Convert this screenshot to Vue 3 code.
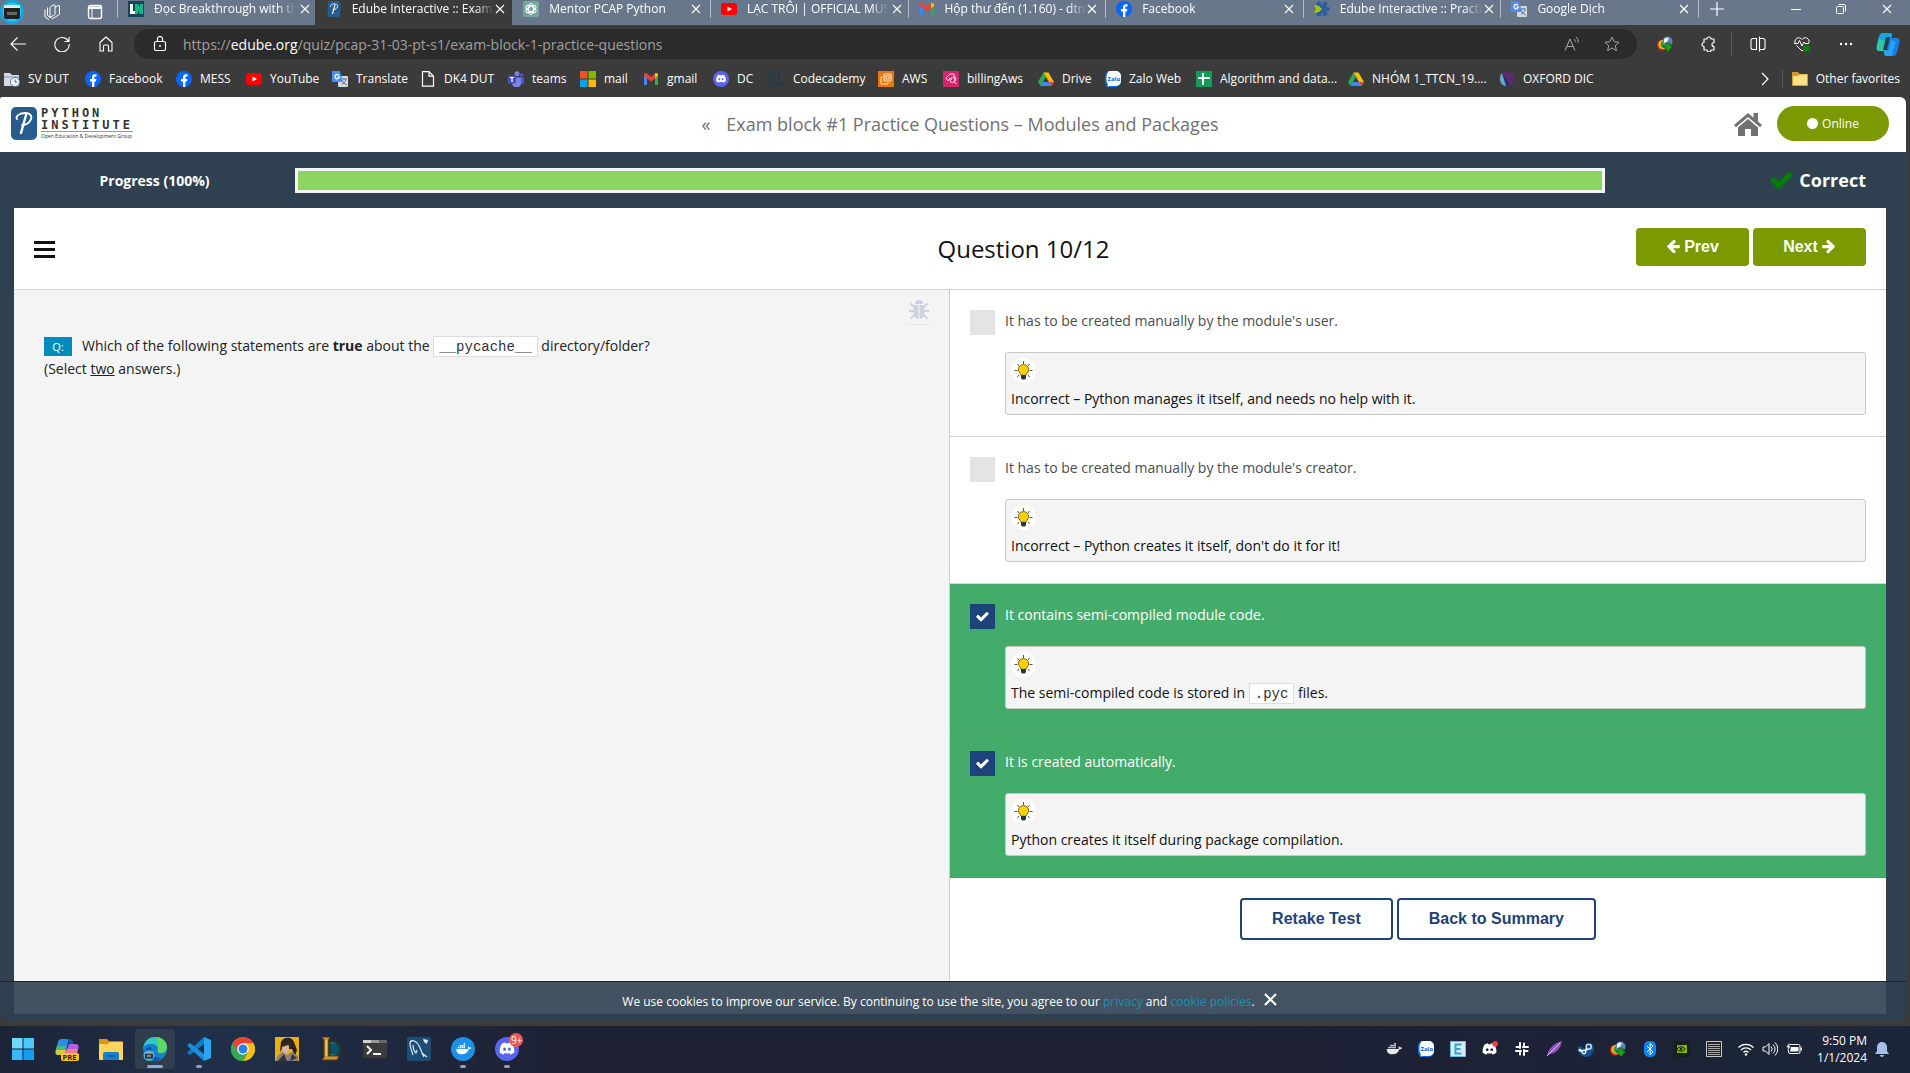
<script setup>
import { h } from 'vue'

const gLetterT = '<rect x="6" y="5" width="10" height="11" rx="1" fill="#d5d8dc"/><path d="M9 8h6M12 7v1M14 8c0 3-3 5-4 5M10 9c1 3 3 4 5 5" stroke="#5f7790" fill="none"/><path d="M1 0h7l3 11H1a1 1 0 0 1-1-1V1a1 1 0 0 1 1-1z" fill="#4d8df6"/><path d="M7 4.300A2.200 2.200 0 1 0 7.400 6H5.400" stroke="#fff" fill="none" stroke-width="1.200"/>'
const idm = '<circle cx="5.500" cy="9" r="5.500" fill="#d9281c"/><circle cx="6" cy="8.500" r="4.500" fill="#f0c419"/><circle cx="7" cy="8.500" r="3.400" fill="#2c9b3b"/><circle cx="10.500" cy="5.500" r="5" fill="#5d83b8"/><path d="M7 3a4 4 0 0 1 5-1l-2 4-3 1z" fill="#e9eef2"/><path d="M6 10h3V7h4v3h3l-5 6z" fill="#19a01c" stroke="#0c4f10" stroke-width=".6"/>'
const discordFace = 'M17 6.500a14 14 0 0 0-3.200-1l-.5.900a12 12 0 0 0-2.600 0l-.5-.9a14 14 0 0 0-3.200 1C5 9.500 4.500 12.500 4.700 15.500a13 13 0 0 0 4 2l.9-1.500c1.600.5 3.200.5 4.800 0l.9 1.500a13 13 0 0 0 4-2c.3-3.500-.6-6.500-2.300-9zM9.600 13.700c-1.900 0-1.900-3.100 0-3.100s1.900 3.100 0 3.100zm4.800 0c-1.900 0-1.900-3.100 0-3.100s1.900 3.100 0 3.100z'
const whale = 'M3 12h15c1 0 1-2 .3-3 .8-.8 1.500-.5 2 .8 1 0 2 .1 2.700.8-.8 1.500-2 1.700-3.300 1.700C18 17 15 19 10.500 19 5.500 19 3 16.500 3 12zM5 9h2v2H5zm2.600 0h2v2h-2zm2.600 0h2v2h-2zm2.600 0h2v2h-2zM7.600 6.500h2v2h-2zm2.600 0h2v2h-2zm2.600 0h2v2h-2zm0-2.500h2v2h-2z'
const steamPath = '<circle cx="12" cy="12" r="12" fill="#14508c"/><path d="M1 7A12 12 0 0 1 20 3L12 12z" fill="#10233f"/><path d="M1 13l8 3.500 7-7" stroke="#e8eef5" stroke-width="3.500" fill="none"/><circle cx="16" cy="8.500" r="3.800" fill="#14508c" stroke="#e8eef5" stroke-width="2"/><circle cx="9" cy="16.500" r="2.600" fill="#14508c" stroke="#e8eef5" stroke-width="2"/>'

const icons = {
  avatar: ['0 0 24 24', '<circle cx="12" cy="12" r="12" fill="#12a5e0"/><circle cx="12" cy="12" r="9.500" fill="#2fc3f5"/><path d="M4 8h16v9a2 2 0 0 1-2 2H6a2 2 0 0 1-2-2z" fill="#222"/><path d="M4 5h16v3H4z" fill="#e8e8e8"/><path d="M7 12h10v3H7z" fill="#666"/>'],
  workspaces: ['0 0 16 16', '<g fill="none" stroke="#fff"><path d="M1 5.500v7.500l4 2.500"/><path d="M3.500 3.500v8l4 2.500"/><path d="M6 3.500a1 1 0 0 1 .6-.9L10 .8a.7.7 0 0 1 1 .6V10a1 1 0 0 1-.5.800L6 13.500z"/><path d="M11 3.200l3.500-1.700a.7.7 0 0 1 1 .6V10a1 1 0 0 1-.5.800L8 15"/></g>'],
  tabmenu: ['0 0 16 16', '<rect x="1.500" y="1.500" width="13" height="13" rx="2" fill="none" stroke="#fff" stroke-width="1.400"/><path d="M1.500 2.500h13v2.500h-13z" fill="#fff"/><path d="M5 5v9" stroke="#fff"/>'],
  ln: ['0 0 16 16', '<path d="M0 0h16v16H0z" fill="#12485a"/><path d="M2 3h3v7h3v3H2z" fill="#fff"/><path d="M7 13V3h3l2 4V3h3v10h-3l-2-4v4z" fill="#12b886"/>'],
  python: ['0 0 26 33', '<rect width="26" height="33" rx="5" fill="#265d8e"/><g fill="none" stroke="#fff" stroke-linecap="round" stroke-linejoin="round"><path d="M6 12c-2-3 3-6 8-6 6 0 8 4 5 8-2 3-5 4-8 4" stroke-width="1.800"/><path d="M15 8l-5 18" stroke-width="2.400"/></g>'],
  chatgpt: ['0 0 16 16', '<rect width="16" height="16" rx="2" fill="#74aa9c"/><g fill="none" stroke="#fff" stroke-width="1"><ellipse cx="8" cy="8" rx="2.600" ry="5.500"/><ellipse cx="8" cy="8" rx="2.600" ry="5.500" transform="rotate(60 8 8)"/><ellipse cx="8" cy="8" rx="2.600" ry="5.500" transform="rotate(120 8 8)"/></g>'],
  youtube: ['0 0 16 16', '<rect y="2" width="16" height="12" rx="3" fill="#f00"/><path d="M6.500 5.500v5L11 8z" fill="#fff"/>'],
  gmail: ['0 0 16 16', '<path d="M1 14V4l3 2v8z" fill="#4285f4"/><path d="M12 14V6l3-2v10z" fill="#34a853"/><path d="M1 4c0-2 2-2.500 3-1.500L8 6l4-3.500v5L8 10.500 1 5z" fill="#ea4335"/><path d="M12 2.500c1-1 3-.5 3 1.500v1l-3 2.500z" fill="#fbbc04"/>'],
  facebook: ['0 0 16 16', '<circle cx="8" cy="8" r="8" fill="#0866ff"/><path d="M7 16v-5.500H5V8h2V6.500C7 4.300 8 3.200 10 3.200l1.500.1v2.200h-1c-.8 0-1.100.4-1.100 1.200V8h2l-.4 2.500H9.400V16z" fill="#fff"/>'],
  edube: ['0 0 16 16', '<g fill="#2c5f9e"><circle cx="5" cy="3" r="2.500"/><circle cx="11" cy="3" r="2.500"/><circle cx="14" cy="8" r="2"/><circle cx="11" cy="13" r="2.500"/><circle cx="5" cy="13" r="2.500"/><circle cx="9" cy="8" r="4"/></g><path d="M0 4l5 1 3 3-3 3-5 1 2-4z" fill="#a3c614"/>'],
  gtranslate: ['0 0 16 16', gLetterT],
  close: ['0 0 10 10', '<path d="M1 1l8 8M9 1L1 9" stroke="currentColor" stroke-width="1.200"/>'],
  closeBold: ['0 0 14 14', '<path d="M1 1l12 12M13 1L1 13" stroke="currentColor" stroke-width="2.200"/>'],
  plus: ['0 0 16 16', '<path d="M8 1v14M1 8h14" stroke="#fff" stroke-width="1.200"/>'],
  minimize: ['0 0 10 10', '<path d="M0 5.500h10" stroke="#fff"/>'],
  restore: ['0 0 10 10', '<rect x=".5" y="2.500" width="7" height="7" rx="1" fill="none" stroke="#fff"/><path d="M2.500.5H8A1.500 1.500 0 0 1 9.500 2v5.500" fill="none" stroke="#fff"/>'],
  back: ['0 0 16 16', '<path d="M16 8H1M7.500 1.500L1 8l6.500 6.500" fill="none" stroke="#fff" stroke-width="1.100"/>'],
  reload: ['0 0 16 16', '<path d="M14.500 5.500A7.200 7.200 0 1 0 15.200 8M15 1v4.500h-4.500" fill="none" stroke="#fff" stroke-width="1.100"/>'],
  homeOutline: ['0 0 16 16', '<path d="M2 6.500L8 1l6 5.500V15h-3.500V10a1 1 0 0 0-1-1h-3a1 1 0 0 0-1 1v5H2z" fill="none" stroke="#fff" stroke-width="1.100" stroke-linejoin="round"/>'],
  lock: ['0 0 16 16', '<rect x="2.500" y="5.500" width="11" height="9" rx="1.500" fill="none" stroke="#fff" stroke-width="1.200"/><path d="M5.500 5V3a2.500 2.500 0 0 1 5 0v2" fill="none" stroke="#fff" stroke-width="1.200"/><circle cx="8" cy="10" r="1" fill="#fff"/>'],
  readAloud: ['0 0 16 16', '<path d="M1 14.500L6 3l5 11.500M3 10.500h6M10 3c1 .8 1.500 2 1.200 3.200M12 1c1.800 1.500 2.600 3.500 2 5.700" fill="none" stroke="#aaa"/>'],
  star: ['0 0 16 16', '<path d="M8 1l2.100 4.700 5 .5-3.800 3.400 1.100 5L8 12l-4.400 2.600 1.100-5L.9 6.200l5-.5z" fill="none" stroke="#a5a5a5" stroke-linejoin="round"/>'],
  idm: ['0 0 16 16', idm],
  puzzle: ['0 0 16 16', '<path d="M3 3h3a2 2 0 1 1 4 0h3v3.500a2 2 0 1 0 0 4V14h-3a2 2 0 1 1-4 0H3v-3.500a2 2 0 1 1 0-4z" fill="none" stroke="#fff" stroke-width="1.200" stroke-linejoin="round"/>'],
  split: ['0 0 16 16', '<path d="M6.500 2.500H3a2 2 0 0 0-2 2v7a2 2 0 0 0 2 2h3.500zM9.500 2.500H13a2 2 0 0 1 2 2v7a2 2 0 0 1-2 2H9.500M9.500.5v15" fill="none" stroke="#fff" stroke-width="1.100"/>'],
  heart: ['0 0 16 16', '<path d="M1 7C0 2 5.500 0 8 3.500 10.500 0 16 2 15 7M2.500 9.500L8 15l2-2M0 7.500h4l1.500-3L8 10l2-4 1 1.500h4" fill="none" stroke="#fff"/><circle cx="12.500" cy="12.500" r="3.500" fill="#107c10"/>'],
  dots: ['0 0 16 16', '<g fill="#fff"><circle cx="3" cy="8" r="1.200"/><circle cx="8" cy="8" r="1.200"/><circle cx="13" cy="8" r="1.200"/></g>'],
  copilot: ['0 0 24 24', '<path d="M7 1h7c2 0 2.500 1 2 3l-3 12c-.5 2-1.500 3-3.500 3H3c-2 0-3-1.500-2.500-4L3 4.500C3.600 2 5 1 7 1z" fill="#18a8d8"/><path d="M2.500 7L1 14c-.5 3 .5 5 2.500 5h5c2 0 3-1 3.500-3l1.500-6z" fill="#34c8a0"/><path d="M15 6h6c2 0 3 1.500 2.500 4L21 20c-.6 2.500-2 4-4 4h-6c-2 0-3-1-2.500-3L12 9c.5-2 1.500-3 3-3z" fill="#1c7ee8"/><path d="M8 19h2c2 0 3-1 3.500-3l2-8 4 2-4 14H11c-2.500 0-3-1-3-5z" fill="#2aa3f5"/><path d="M10 5h4l-3 13H7z" fill="#2b3a55"/>'],
  folderSync: ['0 0 16 16', '<path d="M0 2h6l2 2h7v11H0z" fill="#d5dbe3"/><path d="M0 5h15v2H0z" fill="#aeb9c8"/><circle cx="11" cy="11" r="4.500" fill="#f4f6f8" stroke="#5c7da6"/><path d="M11 8.500V11h2" fill="none" stroke="#3c6190"/>'],
  page: ['0 0 16 16', '<path d="M2.500.7h6.500l4.500 4.500v10H2.500zM9 .7v4.500h4.500" fill="none" stroke="#fff" stroke-width="1.200"/>'],
  teams: ['0 0 16 16', '<circle cx="9" cy="2.700" r="2.500" fill="#7b83eb"/><circle cx="13.800" cy="4" r="1.700" fill="#5059c9"/><path d="M11 6.500h5v4.500a3 3 0 0 1-4 2.500z" fill="#5059c9"/><path d="M4 6.500h9V12a4.500 4.500 0 0 1-9 0z" fill="#7b83eb"/><rect y="4.500" width="8" height="8" rx="1" fill="#4b53bc"/><path d="M2 6.500h4M4 6.500v4.500" stroke="#fff" stroke-width="1.200"/>'],
  microsoft: ['0 0 16 16', '<path d="M0 0h7.500v7.500H0z" fill="#f25022"/><path d="M8.500 0H16v7.500H8.500z" fill="#7fba00"/><path d="M0 8.500h7.500V16H0z" fill="#00a4ef"/><path d="M8.500 8.500H16V16H8.500z" fill="#ffb900"/>'],
  discord: ['0 0 24 24', `<circle cx="12" cy="12" r="12" fill="#5865f2"/><path d="${discordFace}" fill="#fff"/>`],
  codecademy: ['0 0 16 16', '<path d="M1 1h9v13H1zM8 4H4v7h4M12 14h4" fill="none" stroke="#243a4c" stroke-width="1.500"/>'],
  aws: ['0 0 16 16', '<path d="M0 0h16v16H0z" fill="#e8780c"/><rect x="6" y="3" width="7" height="7" rx="1" fill="none" stroke="#ffe3c2" stroke-width="1.200"/><rect x="8" y="5" width="3" height="3" fill="none" stroke="#ffe3c2"/><path d="M4.500 6H3v7h7v-1.500" fill="none" stroke="#ffe3c2"/>'],
  billing: ['0 0 16 16', '<path d="M0 0h16v16H0z" fill="#d6246e"/><path d="M3 7l4-4h4v4M3 7l2 3 2-3 2 2M11 5l2 2-1 3" fill="none" stroke="#ffd5e5"/><circle cx="9.500" cy="9" r="2.500" fill="none" stroke="#ffd5e5"/><path d="M11.500 11l2 2" stroke="#ffd5e5"/>'],
  drive: ['0 0 16 16', '<path d="M5.500 1.500h5L8 6z" fill="#188038"/><path d="M5.500 1.500L0 11l2.500 4L8 6z" fill="#34a853"/><path d="M10.500 1.500L16 11h-5L5.500 1.500z" fill="#fbbc04"/><path d="M5 11h11l-2.500 4h-11z" fill="#4285f4"/><path d="M11 11h5l-2.500 4z" fill="#ea4335"/>'],
  zalo: ['0 0 16 16', '<rect width="16" height="16" rx="5" fill="#0068ff"/><path d="M4 0h7a5 5 0 0 1 5 5v5a5 5 0 0 1-5 5H5l-3 .5 1-2C1 11 .5 3 4 0z" fill="#fff"/><text x="2.500" y="10" font-size="6" font-weight="700" font-family="Open Sans, sans-serif" fill="#0068ff">Zalo</text>'],
  sheet: ['0 0 16 16', '<path d="M0 0h16v16H0z" fill="#0f9d58"/><path d="M7 2v12M2 7h12" stroke="#fff" stroke-width="2"/>'],
  oxford: ['0 0 16 16', '<path d="M8 1a7 7 0 0 1 3 13.500L3 2A8 8 0 0 1 8 1z" fill="#5b2b6e"/><path d="M3 2l8 12.500C6 15 3 14 2 12z" fill="#12346f"/><path d="M3 2C.5 4 .3 9 2 12c1 2 3 3 5 3z" fill="#6aa5c9"/>'],
  chevron: ['0 0 16 16', '<path d="M5 2l6 6-6 6" fill="none" stroke="#fff" stroke-width="1.200"/>'],
  folder: ['0 0 16 16', '<path d="M0 1h6l1.500 2H15a1 1 0 0 1 1 1v11H0z" fill="#d29b2c"/><path d="M1 5h5l1.500-1.500H15V14H1z" fill="#ffe08a"/>'],
  home: ['0 0 28 24', '<path d="M14 1L0 13l2 2.200L14 5l12 10.200L28 13l-4-3.500V1h-4.500v4.800z" fill="#727272"/><path d="M14 7l10 8.500V24h-7v-7h-6v7H4v-8.500z" fill="#727272"/>'],
  check: ['100 270 1600 1260', '<path fill="currentColor" d="M1671 566q0 40-28 68l-724 724-136 136q-28 28-68 28t-68-28l-136-136-362-362q-28-28-28-68t28-68l136-136q28-28 68-28t68 28l294 295 656-657q28-28 68-28t68 28l136 136q28 28 28 68z"/>'],
  menu: ['0 0 21 18', '<path d="M0 2.500h21M0 9.500h21M0 16.500h21" stroke="#111" stroke-width="3"/>'],
  arrowLeft: ['60 200 1620 1620', '<path fill="currentColor" d="M1664 896v128q0 53-32.500 90.500t-84.500 37.500h-704l293 294q38 36 38 90t-38 90l-75 76q-37 37-90 37-52 0-91-37l-651-652q-37-37-37-90 0-52 37-91l651-650q38-38 91-38 52 0 90 38l75 74q38 38 38 91t-38 91l-293 293h704q52 0 84.500 37.500t32.500 90.500z"/>'],
  bug: ['0 0 20 20', '<g fill="#ccd3df"><path d="M6 4a4 4 0 0 1 8 0z"/><path d="M4.500 5h5v14C6 18.500 4.500 16 4.500 13zM10.500 5h5v8c0 3-1.500 5.500-5 6z"/></g><path d="M5 7L1.500 3.500M15 7l3.500-3.500M5 11H0M15 11h5M5 15l-3.500 4M15 15l3.500 4" stroke="#ccd3df" stroke-width="1.800" fill="none"/>'],
  bulb: ['0 0 25 25', '<circle cx="12.500" cy="12.500" r="12.500" fill="#fff"/><path d="M12.500 3v3M3.500 12.500h3M18.500 12.500h3M6.500 6l1.500 2M18.500 6L17 8M6.500 19l1.500-2M18.500 19L17 17" stroke="#555"/><path d="M12.500 6.500a5 5 0 0 1 3.500 8.700l-1 2h-5l-1-2a5 5 0 0 1 3.500-8.700z" fill="#fdd205" stroke="#7a5f10" stroke-width=".9"/><path d="M10 17h5v3l-1 1.500h-3L10 20z" fill="#243545"/>'],
  windows: ['0 0 24 24', '<path d="M1 1h10.500v10.500H1z" fill="#6fd8fb"/><path d="M12.500 1H23v10.500H12.500z" fill="#4cc9fa"/><path d="M1 12.500h10.500V23H1z" fill="#38b8f8"/><path d="M12.500 12.500H23V23H12.500z" fill="#109ff2"/>'],
  copilotPre: ['0 0 24 24', '<path d="M6 2h8l-4 16H3c-2 0-3-2-2.500-4L3 5c.5-2 1.500-3 3-3z" fill="#2b8ce6"/><path d="M2 9h9l-1 4H1z" fill="#3cc07a"/><path d="M1 13h10l-2 5H3c-2 0-3-2-2-5z" fill="#d9c93a"/><path d="M12 2h3c2 0 3 2 3.500 5L15 7z" fill="#1c4fb5"/><path d="M14 7h7c2 0 3 2 2.500 4L22 17H10z" fill="#b65cf0"/><path d="M12 12h11l-2 6H9z" fill="#f47a9a"/><rect x="6" y="16" width="18" height="8" rx="2" fill="#fcc419"/><text x="7.500" y="23" font-size="7.500" font-weight="700" font-family="Open Sans, sans-serif" fill="#222">PRE</text>'],
  explorer: ['0 0 24 24', '<path d="M0 2h8l3 3h12v7H0z" fill="#d9980f"/><path d="M0 7h9l2-2.500h12a1 1 0 0 1 1 1V22a1 1 0 0 1-1 1H1a1 1 0 0 1-1-1z" fill="#ffd65a"/><path d="M4 23v-6a2 2 0 0 1 2-2h12a2 2 0 0 1 2 2v6z" fill="#1580d0"/><path d="M8 19h8" stroke="#0d5ca5" stroke-width="1.500"/>'],
  edge: ['0 0 24 24', '<circle cx="12" cy="12" r="12" fill="#1580cf"/><path d="M.5 10C2 3 7 0 12 0c7 0 12 5 12 10 0 4-3 6-6 6s-4-1-3-3c1-6-9-9-14.500-3z" fill="#35c8c0"/><path d="M14 0c6 1 10 5 10 10 0 4-3 6-6 6s-4-1-3-3z" fill="#5bd867"/><path d="M9 11c-3 5 2 11 9 10-6 5-15 2-16-6 0-3 4-6 7-4z" fill="#0c4f9c"/><circle cx="6" cy="18.500" r="5.500" fill="#2db5ea"/><rect x="2" y="15.500" width="8" height="6" rx="1" fill="#333"/><path d="M2 16h8M4 19h4" stroke="#ddd"/>'],
  vscode: ['0 0 24 24', '<path d="M17 0l7 3v18l-7 3z" fill="#2ba3ee"/><path d="M17 0v7L3 18l-3-2.500z" fill="#0f7cc9"/><path d="M17 24v-7L3 6 0 8.500z" fill="#1a8fdd"/>'],
  chrome: ['0 0 24 24', '<circle cx="12" cy="12" r="12" fill="#34a853"/><path d="M12 12L1.600 6A12 12 0 0 1 22.400 6z" fill="#ea4335"/><path d="M12 6h10.400A12 12 0 0 1 12 24l5.200-9z" fill="#fbbc04"/><path d="M1.600 6h10.400l-5.200 9z" fill="#ea4335"/><path d="M1.600 6A12 12 0 0 0 12 24l5-9H6.800z" fill="#34a853"/><circle cx="12" cy="12" r="5.800" fill="#fff"/><circle cx="12" cy="12" r="4.500" fill="#2f7de9"/>'],
  pubg: ['0 0 24 24', '<path d="M0 0h24v24H0z" fill="#e9b10e"/><path d="M6 5c3-6 11-5 13 0l3 8-2 6-3-7H7L5 15z" fill="#2b211f"/><path d="M7 8h7v6l-3 3-4-3z" fill="#d9b49c"/><path d="M6 7l10-3v7l-3-3-6 2z" fill="#33272a"/><path d="M1 24c1-6 4-8 7-9l4 3 5-3 6 4v5z" fill="#8a8280"/><path d="M3 24l6-7 3 7zM15 24l2-7 5 4z" fill="#3a3636"/>'],
  lol: ['0 0 24 24', '<circle cx="13" cy="12" r="9" fill="#0d4552" stroke="#2e2c25" stroke-width="2"/><path d="M12 5a7 7 0 1 1 0 14" fill="#157a85"/><path d="M12 8a5 5 0 1 1 0 8z" fill="#0b5263"/><path d="M3 0h8l-1.500 3v16H20l-2 4H3l2-3V3z" fill="#c79638" stroke="#5a3d12"/><path d="M6.500 3H8v16H6.500z" fill="#ecc66a"/>'],
  terminal: ['0 0 24 24', '<path d="M0 3h24v18H0z" fill="#3b3b3b"/><path d="M0 3h8v3H0z" fill="#d0d0d0"/><path d="M8 3h8v3H8z" fill="#999"/><path d="M16 3h8v3h-8z" fill="#666"/><path d="M4 9l4 4-4 4M10 17h8" fill="none" stroke="#fff" stroke-width="2"/>'],
  mysql: ['0 0 24 24', '<rect width="24" height="24" rx="2" fill="#1d4c74"/><path d="M6 18c-1-4-3-7-3-11s4-5 8 0c2 3 3 6 4 9l5 4M6 8c0 3 1 6 3 8l1-3M15 16l2 4" fill="none" stroke="#dce9f4" stroke-width="1.200"/><path d="M16 2l5 1-1 4-3-2z" fill="#dce9f4"/>'],
  docker: ['0 0 24 24', `<circle cx="12" cy="12" r="12" fill="#1d90e8"/><path transform="translate(3 3) scale(.75)" d="${whale}" fill="#fff"/>`],
  discordBadge: ['0 0 32 28', `<g transform="translate(0 4)"><circle cx="12" cy="12" r="12" fill="#5865f2"/><path d="${discordFace}" fill="#fff"/></g><circle cx="21" cy="7" r="7" fill="#ee5555"/><text x="16" y="11" font-size="10" font-family="Open Sans, sans-serif" fill="#fff">9+</text>`],
  whale: ['2 3 21 18', `<path d="${whale}" fill="#e8eaee"/>`],
  eKey: ['0 0 16 16', '<path d="M.5.5h15v15H.5z" fill="#cdeefa" stroke="#6eb9dc"/><path d="M11.500 3.500h-6v9h6M5.500 8h5" fill="none" stroke="#3f9fc8" stroke-width="2"/>'],
  discordTray: ['4 3 17 17', `<path d="${discordFace}" fill="#fff"/><circle cx="18" cy="6" r="3" fill="#f04040"/>`],
  slack: ['0 0 16 16', '<path d="M6 2v5M10 9v5M2 10h5M9 6h5M10 2.500v2M6 11.500v2M2.500 6h2M11.500 10h2" stroke="#fff" stroke-width="2" stroke-linecap="round"/>'],
  feather: ['0 0 16 16', '<path d="M1 15C2 8 8 2 16 0c-1 5-3 9-8 12l-4 1z" fill="#9355c6"/><path d="M1 15L14 2" stroke="#e0bdf4"/>'],
  steam: ['0 0 24 24', steamPath],
  bluetooth: ['0 0 16 16', '<rect x="2" width="12" height="16" rx="5" fill="#0a84ff"/><path d="M5 5l6 6-3 2.500v-11L11 5l-6 6" fill="none" stroke="#fff"/>'],
  nvidia: ['0 0 16 16', '<path d="M0 0h16v16H0z" fill="#1a1d1a"/><path d="M3 4h10v8H3z" fill="#76b900"/><path d="M3 8c2-3 6-3 8 0-2 3-6 3-8 0z" fill="none" stroke="#1a1d1a"/><circle cx="7" cy="8" r="1.300" fill="#1a1d1a"/>'],
  gridKey: ['0 0 16 16', '<path d="M.5.5h15v15H.5z" fill="#222" stroke="#c8c8c8"/><path d="M2 3.500h12M2 5.500h12M2 7.500h12M2 9.500h12M2 11.500h12M2 13.500h12" stroke="#aaa"/>'],
  wifi: ['0 0 16 16', '<g fill="none" stroke="#fff" stroke-width="1.300"><path d="M.5 6.500a10.500 10.500 0 0 1 15 0M3 9a7 7 0 0 1 10 0M5.500 11.500a3.600 3.600 0 0 1 5 0"/></g><circle cx="8" cy="13.500" r="1.200" fill="#fff"/>'],
  volume: ['0 0 16 16', '<path d="M1 6h2.500L7 2.500v11L3.500 10H1zM9 5.500a3.500 3.500 0 0 1 0 5M11 3.500a6 6 0 0 1 0 9M13 1.500a9 9 0 0 1 0 13" fill="none" stroke="#fff"/>'],
  battery: ['0 0 16 16', '<rect x="2.500" y="3.500" width="11.500" height="9" rx="1.500" fill="none" stroke="#fff"/><path d="M5 6h7.500v4.500H4z" fill="#fff"/><path d="M15.200 6.500v3" stroke="#fff" stroke-width="1.500"/><path d="M3.500 1L0 6.500h2L1 11l4-6H3z" fill="#fff" stroke="#1b2035" stroke-width=".5"/>'],
  bell: ['0 0 16 16', '<path d="M8 1a5 5 0 0 1 5 5v4l2 3H1l2-3V6a5 5 0 0 1 5-5zM6 14h4a2 2 0 0 1-4 0z" fill="#a5bfe6"/>'],
}

const Icon = (props) =>
  h('svg', { class: 'icon', viewBox: icons[props.name][0], innerHTML: icons[props.name][1], 'aria-hidden': 'true' })
Icon.props = ['name']

const tabs = [
  { icon: 'ln', title: 'Đọc Breakthrough with th' },
  { icon: 'python', title: 'Edube Interactive :: Exam', active: true },
  { icon: 'chatgpt', title: 'Mentor PCAP Python' },
  { icon: 'youtube', title: 'LẠC TRÔI | OFFICIAL MUS' },
  { icon: 'gmail', title: 'Hộp thư đến (1.160) - dtn' },
  { icon: 'facebook', title: 'Facebook' },
  { icon: 'edube', title: 'Edube Interactive :: Practi' },
  { icon: 'gtranslate', title: 'Google Dịch' },
]

const bookmarks = [
  ['folderSync', 'SV DUT'],
  ['facebook', 'Facebook'],
  ['facebook', 'MESS'],
  ['youtube', 'YouTube'],
  ['gtranslate', 'Translate'],
  ['page', 'DK4 DUT'],
  ['teams', 'teams'],
  ['microsoft', 'mail'],
  ['gmail', 'gmail'],
  ['discord', 'DC'],
  ['codecademy', 'Codecademy'],
  ['aws', 'AWS'],
  ['billing', 'billingAws'],
  ['drive', 'Drive'],
  ['zalo', 'Zalo Web'],
  ['sheet', 'Algorithm and data...'],
  ['drive', 'NHÓM 1_TTCN_19....'],
  ['oxford', 'OXFORD DIC'],
]

const options = [
  { text: "It has to be created manually by the module's user.", hint: 'Incorrect – Python manages it itself, and needs no help with it.' },
  { text: "It has to be created manually by the module's creator.", hint: "Incorrect – Python creates it itself, don't do it for it!" },
  { text: 'It contains semi-compiled module code.', hint: 'The semi-compiled code is stored in ', code: '.pyc', after: ' files.', correct: true },
  { text: 'It is created automatically.', hint: 'Python creates it itself during package compilation.', correct: true },
]

const progress = 100

const pinned = [
  { icon: 'windows', label: 'Start' },
  { icon: 'copilotPre', label: 'Copilot' },
  { icon: 'explorer', label: 'File Explorer' },
  { icon: 'edge', label: 'Edge', state: 'current' },
  { icon: 'vscode', label: 'Visual Studio Code', state: 'open' },
  { icon: 'chrome', label: 'Chrome' },
  { icon: 'pubg', label: 'Game' },
  { icon: 'lol', label: 'League of Legends' },
  { icon: 'terminal', label: 'Terminal' },
  { icon: 'mysql', label: 'MySQL Workbench' },
  { icon: 'docker', label: 'Docker', state: 'open' },
  { icon: 'discordBadge', label: 'Discord', state: 'open', wide: true },
]

const tray = ['whale', 'zalo', 'eKey', 'discordTray', 'slack', 'feather', 'steam', 'idm', 'bluetooth', 'nvidia', 'gridKey']
</script>

<template>
  <div class="screen">
    <header class="browser">
      <div class="tab-strip">
        <div class="strip-left">
          <button class="plain" aria-label="Profile"><Icon name="avatar" class="size-24" /></button>
          <button class="plain" aria-label="Workspaces"><Icon name="workspaces" /></button>
          <button class="plain" aria-label="Tab actions"><Icon name="tabmenu" /></button>
        </div>
        <div class="tabs">
          <div v-for="tab in tabs" :key="tab.title" class="tab" :class="{ active: tab.active }">
            <Icon :name="tab.icon" />
            <span class="tab-title">{{ tab.title }}</span>
            <button class="plain" aria-label="Close tab"><Icon name="close" class="size-10" /></button>
          </div>
        </div>
        <div class="strip-right">
          <button class="plain new-tab" aria-label="New tab"><Icon name="plus" /></button>
          <button class="plain window-button" aria-label="Minimize"><Icon name="minimize" class="size-10" /></button>
          <button class="plain window-button" aria-label="Restore"><Icon name="restore" class="size-10" /></button>
          <button class="plain window-button" aria-label="Close"><Icon name="close" class="size-10" /></button>
        </div>
      </div>

      <div class="toolbar">
        <nav class="nav-buttons">
          <button class="plain" aria-label="Back"><Icon name="back" /></button>
          <button class="plain" aria-label="Reload"><Icon name="reload" /></button>
          <button class="plain" aria-label="Home"><Icon name="homeOutline" /></button>
        </nav>
        <div class="address">
          <Icon name="lock" />
          <span class="url">https://<b>edube.org</b>/quiz/pcap-31-03-pt-s1/exam-block-1-practice-questions</span>
          <button class="plain" aria-label="Read aloud"><Icon name="readAloud" /></button>
          <button class="plain" aria-label="Add to favorites"><Icon name="star" /></button>
        </div>
        <div class="extensions">
          <button class="plain" aria-label="Download manager"><Icon name="idm" /></button>
          <button class="plain" aria-label="Extensions"><Icon name="puzzle" /></button>
          <button class="plain divided" aria-label="Split screen"><Icon name="split" /></button>
          <button class="plain" aria-label="Browser essentials"><Icon name="heart" /></button>
          <button class="plain" aria-label="More"><Icon name="dots" /></button>
          <button class="plain" aria-label="Copilot"><Icon name="copilot" class="size-24" /></button>
        </div>
      </div>

      <div class="bookmark-bar">
        <nav class="bookmarks">
          <a v-for="([icon, label], i) in bookmarks" :key="i" href="#" class="bookmark"><Icon :name="icon" />{{ label }}</a>
        </nav>
        <div class="bookmark-end">
          <button class="plain" aria-label="More favorites"><Icon name="chevron" /></button>
          <a href="#" class="bookmark others"><Icon name="folder" />Other favorites</a>
        </div>
      </div>
    </header>

    <main class="page">
      <header class="site-header">
        <a href="#" class="logo">
          <Icon name="python" class="logo-mark" />
          <span class="logo-text">
            <span class="logo-name">PYTHON<br />INSTITUTE</span>
            <span class="logo-tagline">Open Education &amp; Development Group</span>
          </span>
        </a>
        <h1><a href="#" aria-label="Back to course">«</a>Exam block #1 Practice Questions – Modules and Packages</h1>
        <div class="site-actions">
          <a href="#" aria-label="Home"><Icon name="home" class="home-icon" /></a>
          <button class="online"><span class="dot"></span>Online</button>
        </div>
      </header>

      <section class="progress-row">
        <span class="progress-label">Progress ({{ progress }}%)</span>
        <div class="progress-track" role="progressbar" :aria-valuenow="progress">
          <div class="progress-fill" :style="{ width: progress + '%' }"></div>
        </div>
        <span class="verdict"><Icon name="check" class="verdict-icon" />Correct</span>
      </section>

      <section class="quiz">
        <header class="quiz-header">
          <button class="plain menu" aria-label="Question list"><Icon name="menu" class="menu-icon" /></button>
          <h2>Question 10/12</h2>
          <div class="pager">
            <button class="green"><Icon name="arrowLeft" class="arrow" />Prev</button>
            <button class="green">Next<Icon name="arrowLeft" class="arrow forward" /></button>
          </div>
        </header>

        <div class="panes">
          <div class="question">
            <button class="plain bug" aria-label="Report a bug"><Icon name="bug" class="bug-icon" /></button>
            <p>
              <span class="q-badge">Q:</span>Which of the following statements are <strong>true</strong> about the
              <code>__pycache__</code> directory/folder?<br />(Select <u>two</u> answers.)
            </p>
          </div>

          <div class="answers">
            <div v-for="(option, i) in options" :key="i" class="option" :class="{ correct: option.correct }">
              <label class="choice">
                <span class="box">
                  <input type="checkbox" :checked="option.correct" disabled />
                  <Icon v-if="option.correct" name="check" class="tick" />
                </span>
                <span>{{ option.text }}</span>
              </label>
              <div class="hint">
                <Icon name="bulb" class="bulb" />
                <p>{{ option.hint }}<code v-if="option.code">{{ option.code }}</code>{{ option.after }}</p>
              </div>
            </div>
            <div class="final-actions">
              <button class="outline">Retake Test</button>
              <button class="outline">Back to Summary</button>
            </div>
          </div>
        </div>
      </section>

      <aside class="cookies">
        <span>We use cookies to improve our service. By continuing to use the site, you agree to our <a href="#">privacy</a> and <a href="#">cookie policies</a>.</span>
        <button class="plain" aria-label="Dismiss"><Icon name="closeBold" class="dismiss" /></button>
      </aside>
    </main>

    <footer class="taskbar">
      <nav class="pinned">
        <button v-for="app in pinned" :key="app.label" class="plain app" :class="app.state" :aria-label="app.label">
          <Icon :name="app.icon" :class="app.wide ? 'badge-icon' : 'size-24'" />
        </button>
      </nav>
      <div class="tray">
        <button v-for="item in tray" :key="item" class="plain tray-item" :aria-label="item"><Icon :name="item" /></button>
        <button class="plain status" aria-label="Network, volume and battery">
          <Icon name="wifi" /><Icon name="volume" /><Icon name="battery" />
        </button>
        <time class="clock">9:50 PM<br />1/1/2024</time>
        <button class="plain bell" aria-label="Notifications"><Icon name="bell" /></button>
      </div>
    </footer>
  </div>
</template>

<style>
body {
  background: #3b3b3b;
}
</style>

<style scoped>
* {
  box-sizing: border-box;
}

.screen {
  display: flex;
  flex-direction: column;
  min-height: 100vh;
  background: #3b3b3b;
  color: #fff;
  font-family: 'Open Sans', 'Noto Sans', sans-serif;
  font-size: 12px;
}

.icon {
  display: block;
  flex: none;
  width: 16px;
  height: 16px;
}

.size-24 {
  width: 24px;
  height: 24px;
}

.size-10 {
  width: 10px;
  height: 10px;
}

.plain {
  display: flex;
  align-items: center;
  justify-content: center;
  padding: 0;
  border: 0;
  background: none;
  color: inherit;
}

a {
  color: inherit;
  text-decoration: none;
}

h1,
h2,
p {
  margin: 0;
  font-weight: 400;
}

/* Tab strip */
.tab-strip {
  display: flex;
  height: 25px;
  padding-bottom: 7px;
  overflow: hidden;
  background: #68778c;
}

.strip-left {
  display: grid;
  grid-template-columns: 31px 42px 44px;
  width: 117px;
}

.strip-left .plain:first-child {
  justify-content: flex-start;
}

.tabs {
  display: flex;
  flex: 1;
  min-width: 0;
}

.tab {
  display: flex;
  flex: 1;
  align-items: center;
  min-width: 0;
  padding: 0 9px 0 10px;
  border-left: 1px solid #b4bcc8;
}

.tab.active {
  margin-bottom: -7px;
  padding-bottom: 7px;
  border-color: #3b3b3b;
  background: #3b3b3b;
}

.tab.active + .tab {
  border-color: transparent;
}

.tab-title {
  flex: 1;
  margin: 0 2px 0 10px;
  line-height: 18px;
  white-space: nowrap;
  -webkit-mask-image: linear-gradient(90deg, #000 124px, transparent 142px);
  mask-image: linear-gradient(90deg, #000 124px, transparent 142px);
}

.strip-right {
  display: flex;
  width: 212px;
  border-left: 1px solid #b4bcc8;
}

.new-tab {
  width: 36px;
  margin-right: 38px;
}

.window-button {
  width: 46px;
}

/* Toolbar */
.toolbar {
  display: flex;
  align-items: center;
  height: 38px;
}

.nav-buttons {
  display: flex;
  width: 134px;
  padding-left: 10px;
  gap: 28px;
}

.address {
  display: flex;
  flex: 1;
  align-items: center;
  height: 30px;
  padding: 0 17px 0 18px;
  border-radius: 15px;
  background: #2b2b2b;
}

.url {
  flex: 1;
  margin-left: 15px;
  color: #a0a0a0;
  font-size: 14px;
}

.url b {
  color: #fff;
  font-weight: 400;
}

.address .plain {
  width: 16px;
  margin-left: 24px;
}

.extensions {
  display: grid;
  grid-template-columns: 44px 44px 52px 38px 49px 36px;
  width: 273px;
  padding-left: 6px;
}

.divided {
  border-left: 1px solid #5a5a5a;
}

/* Bookmarks */
.bookmark-bar {
  display: flex;
  align-items: center;
  justify-content: space-between;
  height: 34px;
  padding-bottom: 3px;
}

.bookmarks {
  display: grid;
  grid-template-columns: 81px 91px 70px 86px 88px 88px 72px 63px 70px 56px 109px 65px 95px 67px 91px 152px 151px 110px;
  padding-left: 4px;
}

.bookmark {
  display: flex;
  align-items: center;
  gap: 8px;
  white-space: nowrap;
}

.bookmark-end {
  display: flex;
  gap: 9px;
  padding-right: 10px;
}

.others {
  padding-left: 9px;
  border-left: 1px solid #5a5a5a;
}

/* Page */
.page {
  position: relative;
  display: flex;
  flex: 1;
  flex-direction: column;
  margin: 0 4px 5px 0;
  overflow: hidden;
  border-radius: 2px 6px 8px 8px;
  background: #2f4050;
  font-size: 14px;
}

.site-header {
  display: grid;
  grid-template-columns: 1fr auto 1fr;
  align-items: center;
  height: 55px;
  padding: 0 17px 2px 31px;
  background: #fff;
  color: #717171;
}

.logo {
  display: flex;
  gap: 4px;
  margin-left: -20px;
  color: #333;
}

.logo-mark {
  width: 26px;
  height: 33px;
}

.logo-text {
  display: flex;
  flex-direction: column;
  align-items: flex-start;
}

.logo-name {
  border-bottom: 1px solid #7ba3c4;
  font: 700 12px/12px 'DejaVu Sans Mono', monospace;
  letter-spacing: 3px;
}

.logo-tagline {
  font-size: 5px;
  line-height: 8px;
}

h1 {
  display: flex;
  gap: 16px;
  font-size: 18px;
  line-height: 24px;
}

.site-actions {
  display: flex;
  align-items: center;
  justify-content: flex-end;
  gap: 15px;
}

.home-icon {
  width: 28px;
  height: 24px;
}

.online {
  display: flex;
  align-items: center;
  justify-content: center;
  gap: 4px;
  width: 112px;
  height: 35px;
  border: 0;
  border-radius: 18px;
  background: #7b9a01;
  color: #fff;
  font: 12px 'Open Sans', sans-serif;
}

.dot {
  width: 11px;
  height: 11px;
  border-radius: 50%;
  background: #fff;
}

.progress-row {
  display: grid;
  grid-template-columns: 281px 1fr 281px;
  align-items: center;
  height: 56px;
  padding: 0 20px 0 14px;
}

.progress-label {
  font-weight: 700;
  text-align: center;
}

.progress-track {
  height: 25px;
  border: 3px solid #f5f5f5;
  background: #f5f5f5;
}

.progress-fill {
  height: 100%;
  background: #8dd460;
}

.verdict {
  display: flex;
  align-items: center;
  justify-content: flex-end;
  gap: 6px;
  padding-right: 20px;
  font-size: 18px;
  font-weight: 700;
}

.verdict-icon {
  width: 23px;
  height: 18px;
  color: #008000;
}

/* Quiz */
.quiz {
  display: flex;
  flex: 1;
  flex-direction: column;
  margin: 0 20px 7px 14px;
  background: #fff;
  color: #222;
}

.quiz-header {
  display: grid;
  grid-template-columns: 377px 1fr 230px;
  align-items: center;
  height: 82px;
  padding: 0 20px;
  border-bottom: 1px solid #d4d4d4;
}

.menu {
  justify-content: flex-start;
}

.menu-icon {
  width: 21px;
  height: 18px;
}

h2 {
  color: #111;
  font-size: 24px;
  text-align: center;
}

.pager {
  display: grid;
  grid-template-columns: 1fr 1fr;
  gap: 4px;
  padding-bottom: 4px;
}

.green {
  display: flex;
  align-items: center;
  justify-content: center;
  gap: 4px;
  height: 38px;
  padding: 0;
  border: 0;
  border-radius: 4px;
  background: #7b9a01;
  color: #fff;
  font: 700 16px 'Liberation Sans', Arial, sans-serif;
}

.arrow {
  width: 14px;
  height: 14px;
}

.forward {
  transform: scaleX(-1);
}

.panes {
  display: grid;
  flex: 1;
  grid-template-columns: 1fr 1fr;
}

.question {
  padding: 8px 20px 0 30px;
  border-right: 1px solid #ccc;
  background: #f4f4f4;
}

.bug {
  width: 20px;
  height: 27px;
  margin-left: auto;
  border-bottom: 1px dotted #ddd;
}

.bug-icon {
  width: 20px;
  height: 20px;
  margin-bottom: 2px;
}

.question p {
  margin-top: 9px;
  line-height: 23px;
}

.q-badge {
  display: inline-block;
  width: 28px;
  margin-right: 10px;
  background: #008cba;
  color: #fff;
  font-size: 11px;
  line-height: 19px;
  text-align: center;
}

code {
  padding: 2px 5px 1px;
  border: 1px solid #ddd;
  background: #fff;
  color: #333;
  font: 14px 'Liberation Mono', monospace;
}

.option {
  padding: 20px 20px 21px;
  border-bottom: 1px solid #d4d4d4;
}

.correct {
  border-color: #4f9d6a;
  background: #44ac6a;
}

.choice {
  display: flex;
  gap: 10px;
  height: 42px;
  color: #4d4d4d;
  line-height: 21px;
}

.correct .choice {
  color: #fff;
}

.box {
  display: grid;
  place-items: center;
  width: 25px;
  height: 25px;
  background: #e4e4e4;
}

.box > * {
  grid-area: 1 / 1;
}

.box input {
  width: 25px;
  height: 25px;
  margin: 0;
  appearance: none;
}

.box input:checked {
  background: #1f4278;
}

.tick {
  z-index: 1;
  width: 13px;
  height: 11px;
  color: #fff;
}

.hint {
  margin-left: 35px;
  padding: 5px 5px 4px;
  border: 1px solid #c8c8c8;
  border-radius: 3px;
  background: #f4f4f4;
  color: #111;
}

.bulb {
  width: 25px;
  height: 25px;
}

.hint p {
  margin-top: 4px;
  line-height: 23px;
}

.final-actions {
  display: flex;
  justify-content: center;
  gap: 4px;
  padding: 20px 0 74px;
}

.outline {
  height: 42px;
  padding: 0 30px;
  border: 2px solid #1f4278;
  border-radius: 4px;
  background: #fff;
  color: #1f4278;
  font: 700 16px 'Liberation Sans', Arial, sans-serif;
}

.cookies {
  position: absolute;
  right: 0;
  bottom: 0;
  left: 0;
  display: flex;
  align-items: center;
  justify-content: center;
  gap: 9px;
  height: 40px;
  padding-right: 7px;
  border-top: 1px solid #1d2329;
  background: rgba(47, 64, 80, 0.9);
  font-size: 12px;
}

.cookies a {
  color: #1a8fb5;
}

.dismiss {
  width: 13px;
  height: 13px;
  margin-bottom: 5px;
}

/* Taskbar */
.taskbar {
  display: flex;
  justify-content: space-between;
  height: 47px;
  padding-bottom: 1px;
  background: linear-gradient(90deg, #1c2336, #20304a 10%, #1e2033 30%, #1e2033 65%, #1b2539);
}

.pinned {
  display: flex;
  align-items: center;
  padding-left: 1px;
}

.app {
  position: relative;
  width: 40px;
  height: 40px;
  margin: 0 2px;
  border-radius: 4px;
}

.current {
  background: #2f3d4c;
}

.open::after,
.current::after {
  position: absolute;
  bottom: 1px;
  width: 6px;
  height: 3px;
  border-radius: 2px;
  background: #9aa0aa;
  content: '';
}

.current::after {
  width: 16px;
  background: #8fa9d0;
}

.badge-icon {
  width: 32px;
  height: 28px;
  margin: -4px -8px 0 0;
}

.tray {
  display: flex;
  align-items: center;
  padding-right: 20px;
}

.tray-item {
  width: 32px;
}

.status {
  gap: 8px;
  margin-left: 8px;
}

.clock {
  width: 65px;
  line-height: 17px;
  text-align: right;
}

.bell {
  margin-left: 7px;
}
</style>
